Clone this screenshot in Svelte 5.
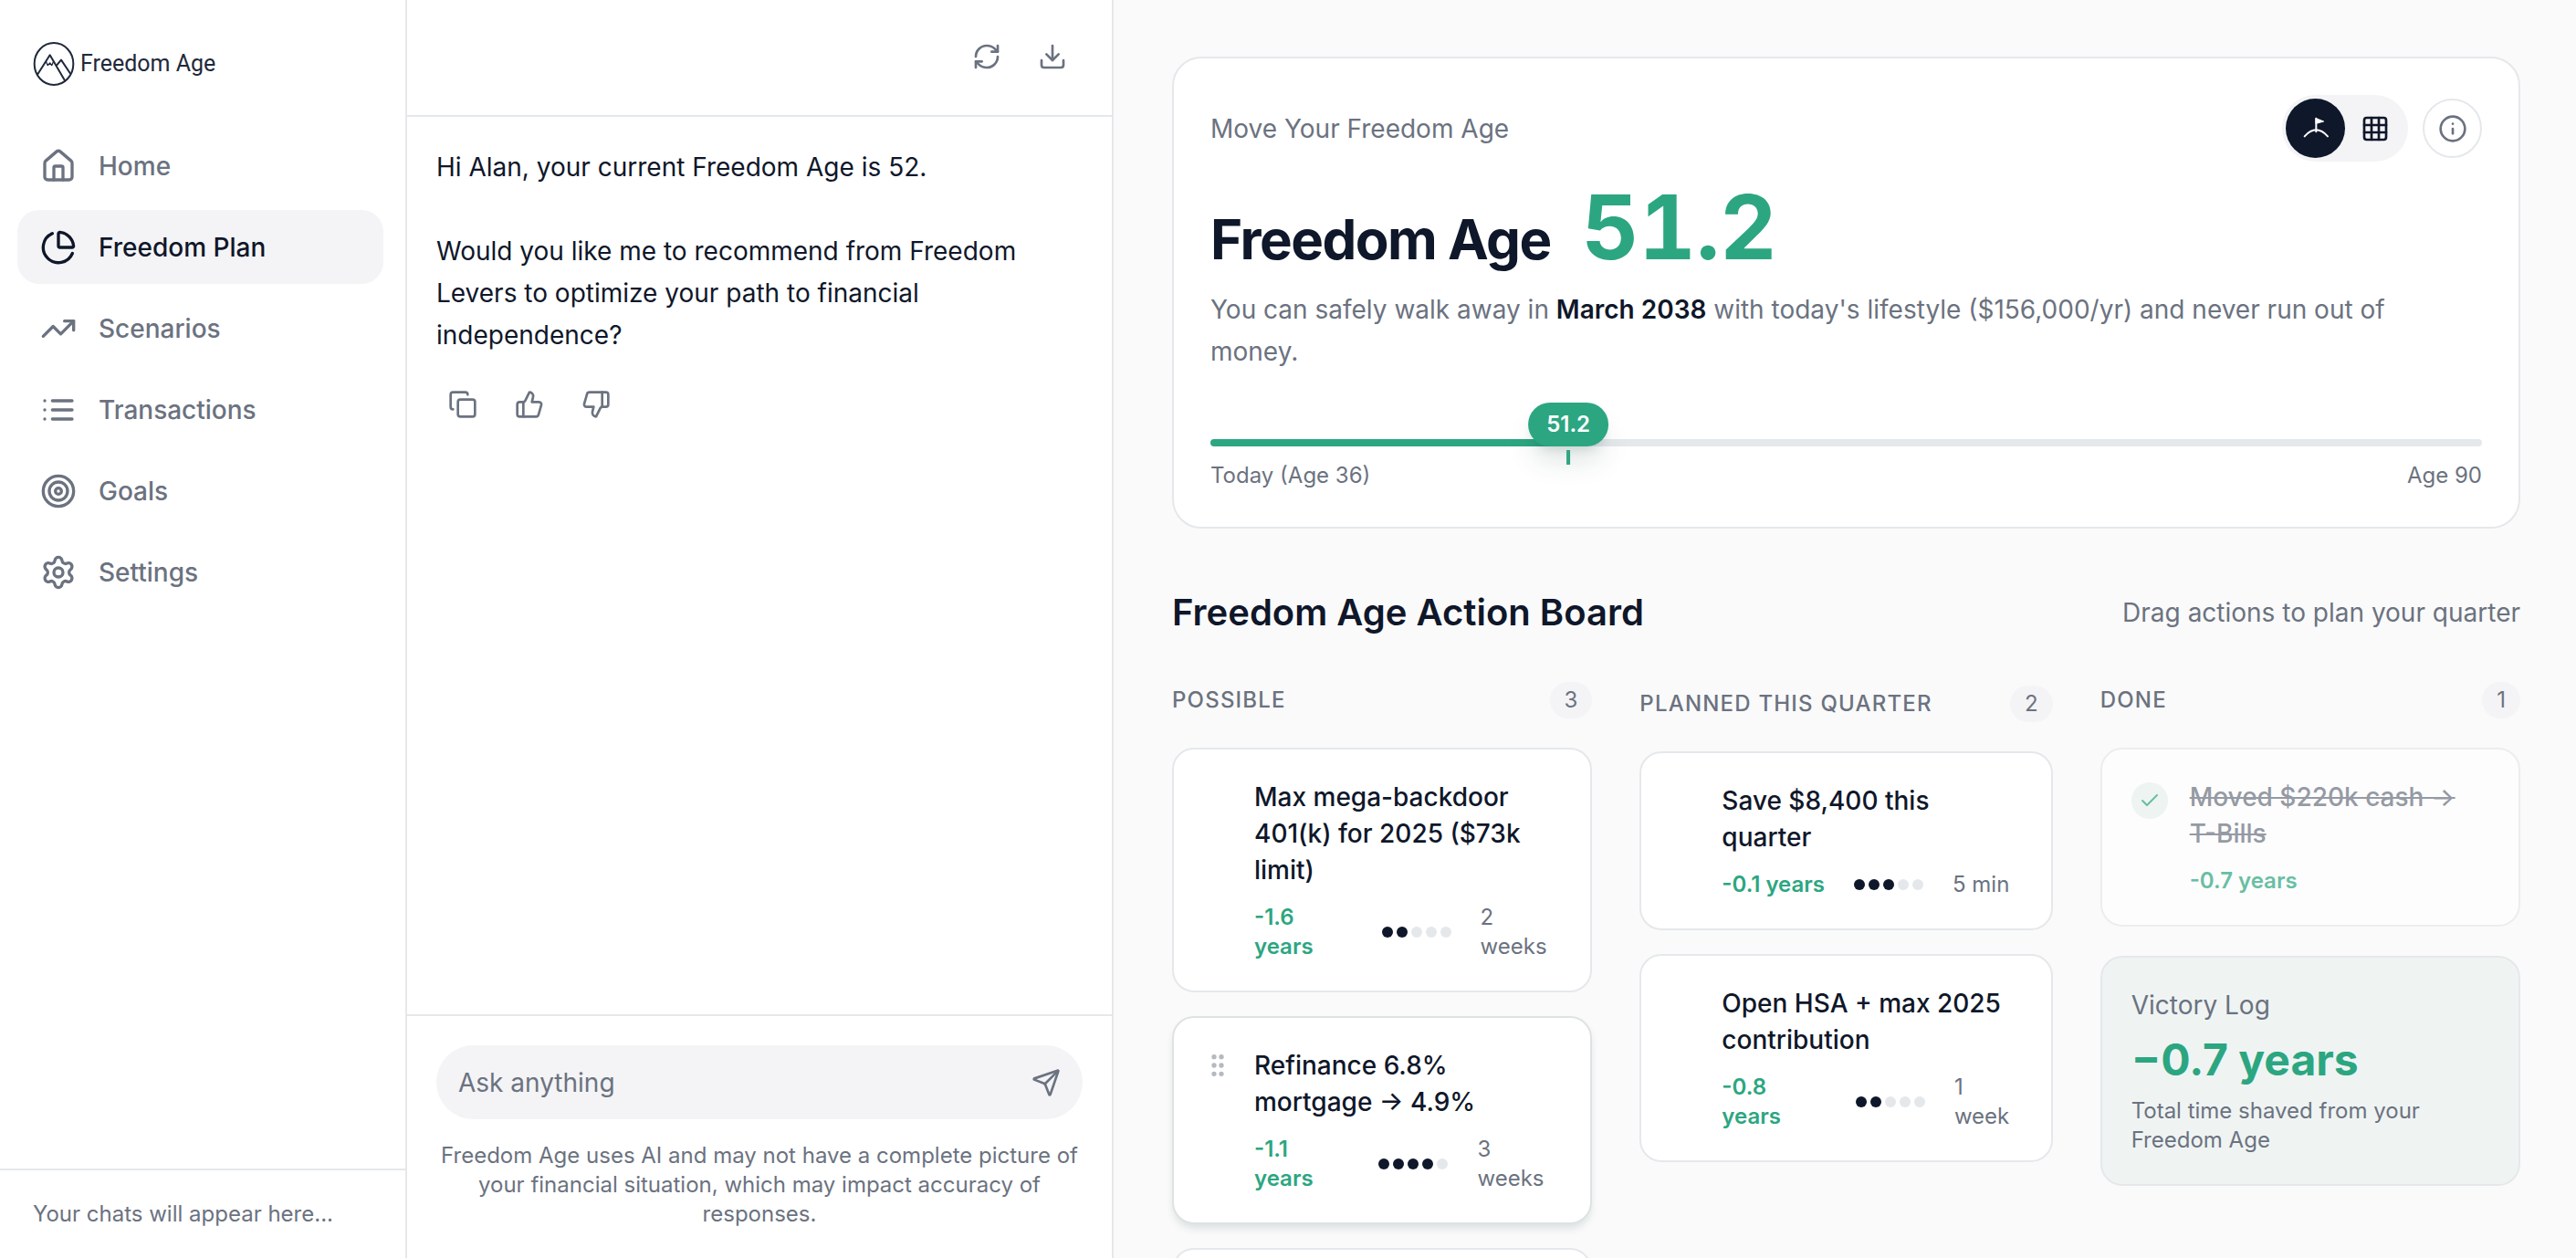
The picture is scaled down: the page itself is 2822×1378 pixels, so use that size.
<script lang="ts">
	type Action = {
		title: string;
		impact: string;
		effort: number;
		time: string;
		active?: boolean;
	};

	const icons: Record<string, string[]> = {
		home: [
			'M15 21v-8a1 1 0 0 0-1-1h-4a1 1 0 0 0-1 1v8',
			'M3 10a2 2 0 0 1 .709-1.528l7-5.999a2 2 0 0 1 2.582 0l7 5.999A2 2 0 0 1 21 10v9a2 2 0 0 1-2 2H5a2 2 0 0 1-2-2z'
		],
		pie: [
			'M21 12c.552 0 1.005-.449.95-.998a10 10 0 0 0-8.953-8.951c-.55-.055-.998.398-.998.95v8a1 1 0 0 0 1 1z',
			'M21.21 15.89A10 10 0 1 1 8 2.83'
		],
		trend: ['M22 7l-8.5 8.5-5-5L2 17', 'M16 7h6v6'],
		list: ['M3 6h.01', 'M3 12h.01', 'M3 18h.01', 'M8 6h13', 'M8 12h13', 'M8 18h13'],
		target: [
			'M2 12a10 10 0 1 0 20 0a10 10 0 1 0-20 0',
			'M6 12a6 6 0 1 0 12 0a6 6 0 1 0-12 0',
			'M10 12a2 2 0 1 0 4 0a2 2 0 1 0-4 0'
		],
		settings: [
			'M9.671 4.136a2.34 2.34 0 0 1 4.659 0 2.34 2.34 0 0 0 3.319 1.915 2.34 2.34 0 0 1 2.33 4.033 2.34 2.34 0 0 0 0 3.831 2.34 2.34 0 0 1-2.33 4.033 2.34 2.34 0 0 0-3.319 1.915 2.34 2.34 0 0 1-4.659 0 2.34 2.34 0 0 0-3.32-1.915 2.34 2.34 0 0 1-2.33-4.033 2.34 2.34 0 0 0 0-3.831A2.34 2.34 0 0 1 6.35 6.051a2.34 2.34 0 0 0 3.319-1.915',
			'M9 12a3 3 0 1 0 6 0a3 3 0 1 0-6 0'
		],
		refresh: [
			'M3 12a9 9 0 0 1 9-9 9.75 9.75 0 0 1 6.74 2.74L21 8',
			'M21 3v5h-5',
			'M21 12a9 9 0 0 1-9 9 9.75 9.75 0 0 1-6.74-2.74L3 16',
			'M8 16H3v5'
		],
		download: ['M21 15v4a2 2 0 0 1-2 2H5a2 2 0 0 1-2-2v-4', 'M7 10l5 5 5-5', 'M12 15V3'],
		copy: [
			'M10 8h10a2 2 0 0 1 2 2v10a2 2 0 0 1-2 2H10a2 2 0 0 1-2-2V10a2 2 0 0 1 2-2z',
			'M4 16c-1.1 0-2-.9-2-2V4c0-1.1.9-2 2-2h10c1.1 0 2 .9 2 2'
		],
		up: [
			'M7 10v12',
			'M15 5.88 14 10h5.83a2 2 0 0 1 1.92 2.56l-2.33 8A2 2 0 0 1 17.5 22H4a2 2 0 0 1-2-2v-8a2 2 0 0 1 2-2h2.76a2 2 0 0 0 1.79-1.11L12 2a3.13 3.13 0 0 1 3 3.88Z'
		],
		down: [
			'M17 14V2',
			'M9 18.12 10 14H4.17a2 2 0 0 1-1.92-2.56l2.33-8A2 2 0 0 1 6.5 2H20a2 2 0 0 1 2 2v8a2 2 0 0 1-2 2h-2.76a2 2 0 0 0-1.79 1.11L12 22a3.13 3.13 0 0 1-3-3.88Z'
		],
		send: [
			'M14.536 21.686a.5.5 0 0 0 .937-.024l6.5-19a.496.496 0 0 0-.635-.635l-19 6.5a.5.5 0 0 0-.024.937l7.93 3.18a2 2 0 0 1 1.112 1.11z',
			'm21.854 2.147-10.94 10.939'
		],
		grid: [
			'M5 3h14a2 2 0 0 1 2 2v14a2 2 0 0 1-2 2H5a2 2 0 0 1-2-2V5a2 2 0 0 1 2-2z',
			'M3 9h18',
			'M3 15h18',
			'M9 3v18',
			'M15 3v18'
		],
		info: ['M2 12a10 10 0 1 0 20 0a10 10 0 1 0-20 0', 'M12 16v-4', 'M12 8h.01'],
		check: ['M20 6 9 17l-5-5'],
		grip: [5, 12, 19].flatMap((y) => [9, 15].map((x) => `M${x - 1} ${y}a1 1 0 1 0 2 0a1 1 0 1 0-2 0`))
	};

	const nav = [
		{ label: 'Home', icon: 'home' },
		{ label: 'Freedom Plan', icon: 'pie' },
		{ label: 'Scenarios', icon: 'trend' },
		{ label: 'Transactions', icon: 'list' },
		{ label: 'Goals', icon: 'target' },
		{ label: 'Settings', icon: 'settings' }
	];

	const possible: Action[] = [
		{ title: 'Max mega-backdoor 401(k) for 2025 ($73k limit)', impact: '-1.6 years', effort: 2, time: '2 weeks' },
		{ title: 'Refinance 6.8% mortgage → 4.9%', impact: '-1.1 years', effort: 4, time: '3 weeks', active: true },
		{ title: '', impact: '', effort: 0, time: '' }
	];

	const planned: Action[] = [
		{ title: 'Save $8,400 this quarter', impact: '-0.1 years', effort: 3, time: '5 min' },
		{ title: 'Open HSA + max 2025 contribution', impact: '-0.8 years', effort: 2, time: '1 week' }
	];

	const minAge = 36;
	const maxAge = 90;

	let current = $state('Freedom Plan');
	let age = $state(51.2);
	let message = $state('');
	let pct = $derived(((age - minAge) / (maxAge - minAge)) * 100);
</script>

{#snippet icon(name: string, size: number)}
	<svg
		width={size}
		height={size}
		viewBox="0 0 24 24"
		fill="none"
		stroke="currentColor"
		stroke-width="2"
		stroke-linecap="round"
		stroke-linejoin="round"
		aria-hidden="true"
	>
		{#each icons[name] as d}
			<path {d} />
		{/each}
	</svg>
{/snippet}

{#snippet column(title: string, items: Action[], drop: boolean)}
	<section class="column" class:drop>
		<header class="column-head">
			<h3>{title}</h3>
			<span class="count">{items.length}</span>
		</header>
		<ul class="cards">
			{#each items as item}
				<li class="card" class:active={item.active} draggable="true">
					<span class="grip">{@render icon('grip', 32)}</span>
					<div class="card-body">
						<h4>{item.title}</h4>
						<div class="meta">
							<span class="impact">{item.impact}</span>
							<span class="dots">
								{#each { length: 5 } as _, i}
									<i class:on={i < item.effort}></i>
								{/each}
							</span>
							<span class="time">{item.time}</span>
						</div>
					</div>
				</li>
			{/each}
		</ul>
	</section>
{/snippet}

<div class="app">
	<aside class="sidebar">
		<a class="logo" href="#home">
			<svg width="46" height="48" viewBox="47 45 138 144" fill="none" stroke="currentColor" stroke-width="6" stroke-linejoin="round" aria-hidden="true">
				<ellipse cx="116" cy="117" rx="64" ry="69" />
				<path d="M62 152 103 88 153 173" />
				<path d="M125 122 140 104 171 150" />
				<path d="M90 109l6 13 7-8 6 8 6-13" stroke-width="4" />
			</svg>
			<span>Freedom Age</span>
		</a>
		<nav>
			{#each nav as item}
				<a
					href="#{item.icon}"
					class:current={current === item.label}
					aria-current={current === item.label ? 'page' : undefined}
					onclick={() => (current = item.label)}
				>
					{@render icon(item.icon, 40)}
					<span>{item.label}</span>
				</a>
			{/each}
		</nav>
		<p class="history">Your chats will appear here...</p>
	</aside>

	<section class="chat">
		<header class="chat-head">
			<button class="tool" aria-label="Restart chat">{@render icon('refresh', 32)}</button>
			<button class="tool" aria-label="Download chat">{@render icon('download', 32)}</button>
		</header>
		<div class="messages">
			<p>Hi Alan, your current Freedom Age is 52.</p>
			<p>Would you like me to recommend from Freedom Levers to optimize your path to financial independence?</p>
			<div class="feedback">
				<button aria-label="Copy">{@render icon('copy', 32)}</button>
				<button aria-label="Good response">{@render icon('up', 32)}</button>
				<button aria-label="Bad response">{@render icon('down', 32)}</button>
			</div>
		</div>
		<footer class="composer">
			<form class="ask" onsubmit={(e) => e.preventDefault()}>
				<input type="text" placeholder="Ask anything" aria-label="Ask anything" bind:value={message} />
				<button aria-label="Send">{@render icon('send', 32)}</button>
			</form>
			<p>Freedom Age uses AI and may not have a complete picture of your financial situation, which may impact accuracy of responses.</p>
		</footer>
	</section>

	<main>
		<section class="hero">
			<div class="hero-head">
				<span>Move Your Freedom Age</span>
				<div class="hero-tools">
					<div class="toggle">
						<button class="selected" aria-label="Summit view">
							<svg width="32" height="32" viewBox="93 88 96 96" fill="none" stroke="currentColor" stroke-width="6" stroke-linecap="round" stroke-linejoin="round" aria-hidden="true">
								<path d="M104 161q38-42 76 0" />
								<path d="M142 146v-44" />
								<path d="M142 102l25 10-25 7z" fill="currentColor" stroke-width="3" />
							</svg>
						</button>
						<button aria-label="Table view">{@render icon('grid', 32)}</button>
					</div>
					<button class="info" aria-label="About this number">{@render icon('info', 32)}</button>
				</div>
			</div>
			<div class="headline">
				<h1>Freedom Age</h1>
				<span class="age">{age.toFixed(1)}</span>
			</div>
			<p class="summary">
				You can safely walk away in <strong>March 2038</strong> with today's lifestyle ($156,000/yr) and never run out of money.
			</p>
			<div class="slider" style="--pct: {pct}%">
				<input type="range" min={minAge} max={maxAge} step="0.1" bind:value={age} aria-label="Freedom Age" />
				<output class="bubble">{age.toFixed(1)}</output>
			</div>
			<div class="range-labels">
				<span>Today (Age {minAge})</span>
				<span>Age {maxAge}</span>
			</div>
		</section>

		<header class="board-head">
			<h2>Freedom Age Action Board</h2>
			<span>Drag actions to plan your quarter</span>
		</header>

		<div class="board">
			{@render column('Possible', possible, false)}
			{@render column('Planned This Quarter', planned, true)}
			<section class="column">
				<header class="column-head">
					<h3>Done</h3>
					<span class="count">1</span>
				</header>
				<div class="card done">
					<span class="tick">{@render icon('check', 24)}</span>
					<div class="card-body">
						<h4>Moved $220k cash → <span class="nowrap">T-Bills</span></h4>
						<div class="meta"><span class="impact">-0.7 years</span></div>
					</div>
				</div>
				<div class="victory">
					<h4>Victory Log</h4>
					<strong>−0.7 years</strong>
					<p>Total time shaved from your Freedom Age</p>
				</div>
			</section>
		</div>
	</main>
</div>

<style>
	:global(body) {
		margin: 0;
		background: #fff;
	}
	.app {
		--ink: #0f172a;
		--muted: #6b7280;
		--line: #e5e8eb;
		--soft: #f4f4f6;
		--green: #2ca681;
		display: grid;
		grid-template-columns: 446px 774px minmax(0, 1fr);
		height: 100vh;
		overflow: hidden;
		font-family: Inter, 'Noto Sans', sans-serif;
		font-size: 28px;
		line-height: 40px;
		color: var(--ink);
	}
	.app * {
		box-sizing: border-box;
	}
	h1,
	h2,
	h3,
	h4,
	p,
	ul {
		margin: 0;
		padding: 0;
		font-weight: 400;
		font-size: inherit;
	}
	ul {
		list-style: none;
	}
	svg {
		display: block;
		flex: none;
	}
	a {
		color: inherit;
		text-decoration: none;
	}
	button {
		display: flex;
		align-items: center;
		justify-content: center;
		padding: 0;
		border: 0;
		background: none;
		color: var(--muted);
		cursor: pointer;
	}
	.nowrap {
		white-space: nowrap;
	}

	.sidebar {
		display: flex;
		flex-direction: column;
		border-right: 2px solid var(--line);
	}
	.logo {
		display: flex;
		align-items: center;
		gap: 6px;
		height: 48px;
		margin: 46px 36px 47px;
		font-family: Roboto, sans-serif;
		font-size: 25px;
		color: #1f293b;
	}
	nav {
		display: flex;
		flex: 1;
		flex-direction: column;
		gap: 8px;
		padding: 0 24px 0 19px;
	}
	nav a {
		display: flex;
		align-items: center;
		gap: 24px;
		height: 81px;
		padding: 0 25px;
		border-radius: 24px;
		font-weight: 500;
		color: var(--muted);
	}
	nav a.current {
		background: var(--soft);
		color: var(--ink);
	}
	.history {
		padding: 32px 36px;
		border-top: 2px solid var(--line);
		font-size: 24px;
		line-height: 32px;
		color: var(--muted);
	}

	.chat {
		display: flex;
		flex-direction: column;
		border-right: 2px solid var(--line);
	}
	.chat-head {
		display: flex;
		justify-content: flex-end;
		gap: 8px;
		padding: 30px 33px 32px;
		border-bottom: 2px solid var(--line);
	}
	.tool {
		width: 64px;
		height: 64px;
	}
	.messages {
		display: flex;
		flex: 1;
		flex-direction: column;
		gap: 46px;
		padding: 32px;
		line-height: 46px;
	}
	.feedback {
		display: flex;
		gap: 16px;
		margin-top: -22px;
	}
	.feedback button {
		width: 57px;
		height: 57px;
	}
	.composer {
		padding: 32px;
		border-top: 2px solid var(--line);
		font-size: 24px;
		line-height: 32px;
		text-align: center;
		color: var(--muted);
	}
	.ask {
		display: flex;
		align-items: center;
		height: 81px;
		margin-bottom: 24px;
		padding: 0 24px;
		border-radius: 41px;
		background: var(--soft);
	}
	.ask input {
		flex: 1;
		min-width: 0;
		padding: 0;
		border: 0;
		outline: 0;
		background: none;
		font: inherit;
		font-size: 28px;
		color: var(--ink);
	}
	.ask input::placeholder {
		color: var(--muted);
		opacity: 1;
	}

	main {
		padding: 62px 61px 62px 64px;
		overflow-y: auto;
		scrollbar-width: none;
		background: #fafafa;
	}
	.hero {
		padding: 40px;
		border: 2px solid var(--line);
		border-radius: 32px;
		background: #fff;
	}
	.hero-head {
		display: flex;
		align-items: center;
		justify-content: space-between;
		color: var(--muted);
	}
	.hero-tools {
		display: flex;
		align-items: center;
		gap: 16px;
	}
	.toggle {
		display: flex;
		padding: 4px;
		border-radius: 37px;
		background: var(--soft);
	}
	.toggle button,
	.info {
		width: 65px;
		height: 65px;
		border-radius: 50%;
	}
	.toggle button {
		color: var(--ink);
	}
	.toggle .selected {
		background: var(--ink);
		color: #fff;
	}
	.info {
		border: 2px solid var(--line);
	}
	.headline {
		display: flex;
		align-items: baseline;
		gap: 34px;
		margin-top: 24px;
	}
	h1 {
		font-size: 60px;
		font-weight: 700;
		line-height: 72px;
		letter-spacing: -0.025em;
	}
	.age {
		font-size: 97px;
		font-weight: 700;
		line-height: 96px;
		font-variant-numeric: tabular-nums;
		color: var(--green);
	}
	.summary {
		margin-top: 18px;
		padding-right: 48px;
		line-height: 46px;
		color: var(--muted);
	}
	.summary strong {
		font-weight: 600;
		color: var(--ink);
	}
	.slider {
		position: relative;
		height: 8px;
		margin-top: 73px;
	}
	.slider input {
		display: block;
		width: 100%;
		height: 8px;
		margin: 0;
		border-radius: 4px;
		appearance: none;
		background: linear-gradient(to right, var(--green) var(--pct), var(--line) var(--pct));
		cursor: pointer;
	}
	.slider input::-webkit-slider-thumb {
		width: 4px;
		height: 8px;
		appearance: none;
		background: transparent;
	}
	.bubble {
		position: absolute;
		bottom: 0;
		left: var(--pct);
		padding: 8px 20px;
		border-radius: 24px;
		background: var(--green);
		box-shadow: 0 20px 30px -4px rgb(15 60 50 / 12%), 0 8px 12px -6px rgb(15 60 50 / 16%);
		font-size: 24px;
		font-weight: 600;
		line-height: 32px;
		color: #fff;
		transform: translateX(-50%);
		pointer-events: none;
	}
	.bubble::after {
		content: '';
		position: absolute;
		top: 52px;
		left: 50%;
		width: 4px;
		height: 16px;
		margin-left: -2px;
		background: var(--green);
	}
	.range-labels {
		display: flex;
		justify-content: space-between;
		margin-top: 16px;
		font-size: 24px;
		line-height: 32px;
		color: var(--muted);
	}

	.board-head {
		display: flex;
		align-items: center;
		justify-content: space-between;
		margin: 64px 0 48px;
		color: var(--muted);
	}
	h2 {
		font-size: 40px;
		font-weight: 600;
		line-height: 56px;
		color: var(--ink);
	}
	.board {
		display: grid;
		grid-template-columns: repeat(3, minmax(0, 1fr));
		gap: 48px;
		align-items: start;
	}
	.column.drop {
		padding: 4px;
	}
	.column-head {
		display: flex;
		align-items: center;
		justify-content: space-between;
		margin-bottom: 32px;
		font-size: 24px;
		line-height: 32px;
		color: var(--muted);
	}
	.column-head h3 {
		font-weight: 500;
		letter-spacing: 0.05em;
		text-transform: uppercase;
	}
	.count {
		padding: 4px 16px;
		border-radius: 20px;
		background: var(--soft);
	}
	.cards {
		display: flex;
		flex-direction: column;
		gap: 26px;
	}
	.card {
		display: flex;
		align-items: flex-start;
		gap: 24px;
		padding: 32px;
		border: 2px solid var(--line);
		border-radius: 24px;
		background: #fff;
	}
	.card.active {
		border-color: #dde3e4;
		box-shadow: 0 6px 10px -2px rgb(15 60 50 / 14%);
	}
	.grip {
		margin-top: 4px;
		color: #b5b9c0;
		opacity: 0;
	}
	.active .grip {
		opacity: 1;
	}
	.card-body {
		flex: 1;
		min-width: 0;
	}
	.card h4 {
		font-weight: 500;
	}
	.meta {
		display: flex;
		align-items: center;
		gap: 32px;
		margin-top: 16px;
		font-size: 24px;
		line-height: 32px;
		color: var(--muted);
	}
	.impact {
		font-weight: 600;
		color: var(--green);
	}
	.dots {
		display: flex;
		gap: 4px;
	}
	.dots i {
		width: 12px;
		height: 12px;
		flex: none;
		border-radius: 50%;
		background: var(--line);
	}
	.dots i.on {
		background: var(--ink);
	}
	.done {
		opacity: 0.7;
	}
	.done h4 {
		color: var(--muted);
		text-decoration: line-through;
	}
	.tick {
		display: grid;
		place-items: center;
		width: 40px;
		height: 40px;
		margin-top: 4px;
		border-radius: 50%;
		background: #e9f2f0;
		color: var(--green);
	}
	.victory {
		margin-top: 32px;
		padding: 32px;
		border: 2px solid var(--line);
		border-radius: 24px;
		background: #eff4f3;
		color: var(--muted);
	}
	.victory strong {
		display: block;
		margin: 8px 0;
		font-size: 48px;
		font-weight: 700;
		line-height: 64px;
		color: var(--green);
	}
	.victory p {
		font-size: 24px;
		line-height: 32px;
	}
</style>
